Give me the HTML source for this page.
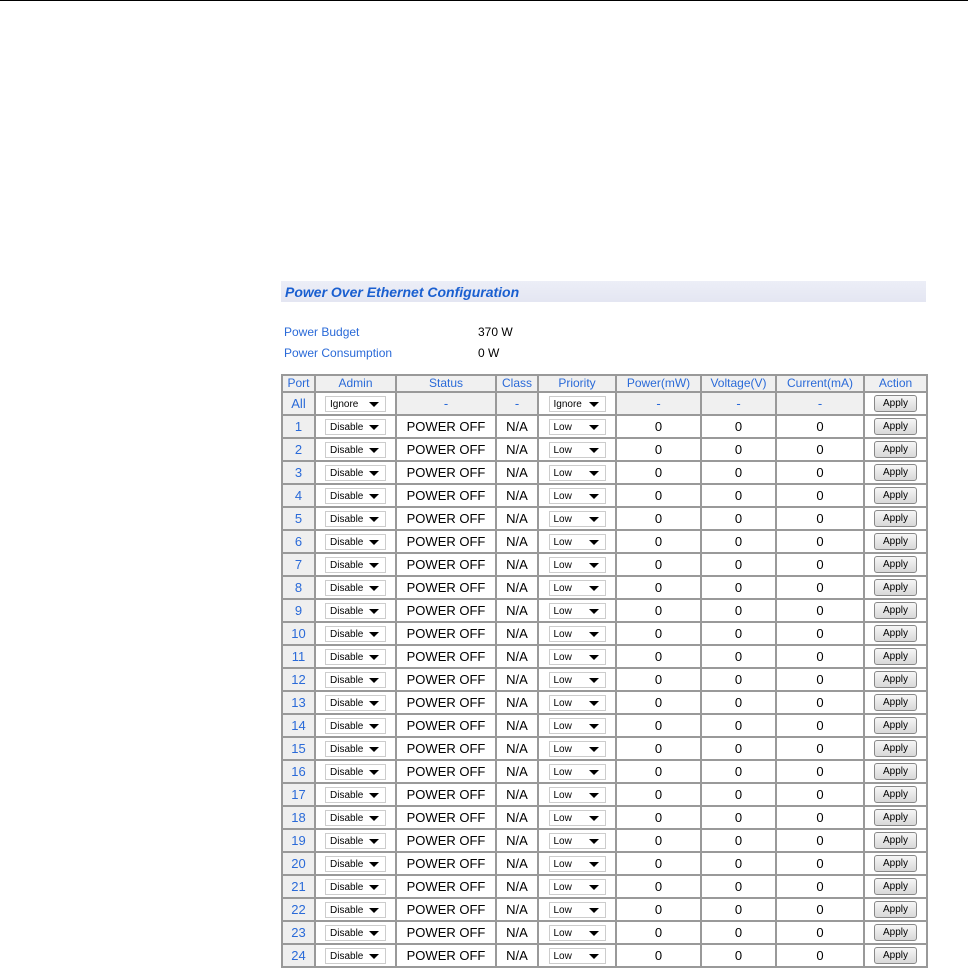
<!DOCTYPE html>
<html><head><style>
body{margin:0;width:969px;height:973px;background:#fff;font-family:"Liberation Sans",Arial,sans-serif;position:relative;overflow:hidden}
.topline{position:absolute;left:0;top:0;width:968px;height:1px;background:#000}
.title{position:absolute;left:281px;top:281px;width:645px;height:21px;background:linear-gradient(#eceef7,#e4e6f2);color:#1a5fd0;font-weight:bold;font-style:italic;font-size:14px;line-height:23px;padding-left:4px;box-sizing:border-box}
.lbl{position:absolute;left:284px;font-size:12px;color:#2a6ad8}
.val{position:absolute;left:478px;font-size:12px;color:#000}
table{position:absolute;left:281px;top:374px;border-collapse:collapse;table-layout:fixed;width:646px}
td{border:2px solid #999;text-align:center;padding:0;font-size:13px;height:21px;overflow:hidden;white-space:nowrap}
tr.h td{color:#2a6ad8;background:#f0f0f0;height:15px;line-height:15px;font-size:12px}
td.p{background:#efefef;color:#2a6ad8}
tr.all td{background:#f0f0f0;color:#2a6ad8}
.sel{display:inline-block;position:relative;height:16px;border:1px solid #ccc;background:#fff;text-align:left;font-size:10px;line-height:16px;padding-left:4px;box-sizing:border-box;vertical-align:middle;color:#000}
.sel:after{content:"";position:absolute;right:6px;top:5px;border-left:5px solid transparent;border-right:5px solid transparent;border-top:5px solid #000}
.a{width:61px}.pr{width:57px}
.btn{display:inline-block;width:43px;height:17px;border:1px solid #888;border-radius:3px;background:linear-gradient(#f6f6f6,#d8d8d8);font-size:10px;line-height:16px;box-sizing:border-box;vertical-align:middle;color:#000}
</style></head><body>
<div class="topline"></div>
<div class="title">Power Over Ethernet Configuration</div>
<div class="lbl" style="top:325px">Power Budget</div><div class="val" style="top:325px">370 W</div>
<div class="lbl" style="top:346px">Power Consumption</div><div class="val" style="top:346px">0 W</div>
<table>
<colgroup><col style="width:33px"><col style="width:81px"><col style="width:100px"><col style="width:42px"><col style="width:78px"><col style="width:85px"><col style="width:75px"><col style="width:88px"><col style="width:63px"></colgroup>
<tr class="h"><td>Port</td><td>Admin</td><td>Status</td><td>Class</td><td>Priority</td><td>Power(mW)</td><td>Voltage(V)</td><td>Current(mA)</td><td>Action</td></tr>
<tr class="all"><td>All</td><td style="background:#fff"><span class="sel a">Ignore</span></td><td>-</td><td>-</td><td style="background:#fff"><span class="sel pr">Ignore</span></td><td>-</td><td>-</td><td>-</td><td style="background:#fff"><span class="btn">Apply</span></td></tr>
<script>
for(let i=1;i<=24;i++)document.write('<tr><td class="p">'+i+'</td><td><span class="sel a">Disable</span></td><td>POWER OFF</td><td>N/A</td><td><span class="sel pr">Low</span></td><td>0</td><td>0</td><td>0</td><td><span class="btn">Apply</span></td></tr>');
</script>
</table>
</body></html>
